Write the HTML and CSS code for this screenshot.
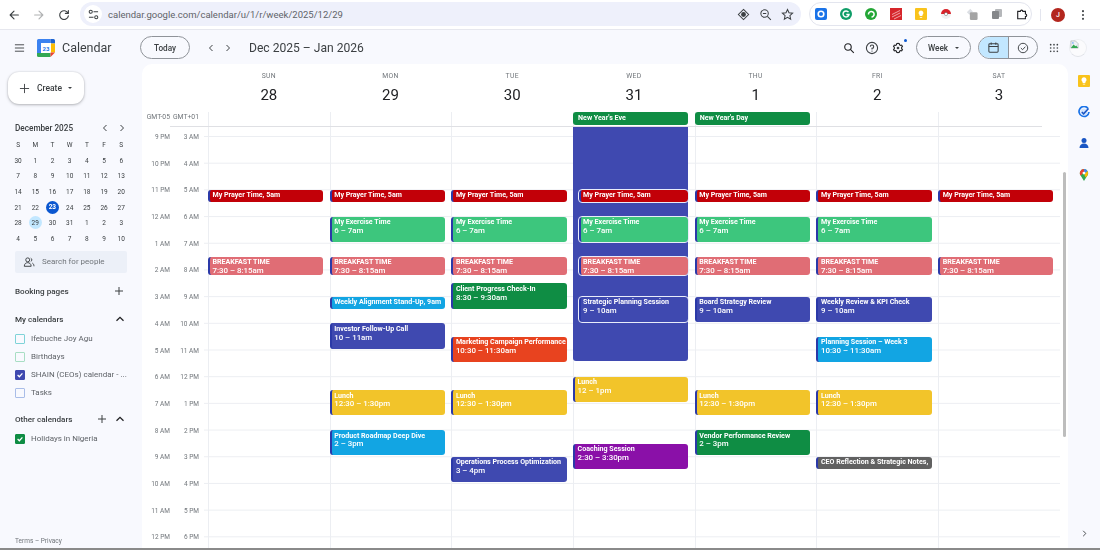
FILE: index.html
```html
<!DOCTYPE html>
<html lang="en">
<head>
<meta charset="utf-8">
<title>Google Calendar - Week</title>
<link rel="stylesheet" href="styles.css">
</head>
<body>
<div class="browser">
  <div class="nav">
    <svg class="ic" viewBox="0 0 16 16"><path d="M13 8H4M8 3.6 3.6 8 8 12.4" class="st"/></svg>
    <svg class="ic off" viewBox="0 0 16 16"><path d="M3 8h9M8 3.6 12.4 8 8 12.4" class="st"/></svg>
    <svg class="ic" viewBox="0 0 16 16"><path d="M12.6 6A5 5 0 1 0 13 9M13 2.8V6.2H9.6" class="st"/></svg>
  </div>
  <div class="omni">
    <span class="tune"><svg viewBox="0 0 12 12" width="11" height="11"><circle cx="3" cy="3" r="1.7" class="thin"/><path d="M6 3h5M1 9h5" class="thin"/><circle cx="9" cy="9" r="1.7" class="thin"/></svg></span>
    <span class="url">calendar.google.com/calendar/u/1/r/week/2025/12/29</span>
    <span class="omni-end">
      <svg class="ic12" viewBox="0 0 14 14"><path d="M7 1.500 12.500 7 7 12.500 1.500 7Z" class="thin"/><circle cx="7" cy="7" r="2.600" fill="#3c4043"/></svg>
      <svg class="ic12" viewBox="0 0 14 14"><circle cx="6" cy="6" r="4" class="thin"/><path d="m9 9 3.800 3.800M4.200 6h3.600" class="thin"/></svg>
      <svg class="ic12" viewBox="0 0 14 14"><path d="m7 1.600 1.600 3.600 3.900.4-2.900 2.600.8 3.900L7 10.100l-3.400 2 .8-3.900L1.500 5.600l3.900-.4Z" class="thin"/></svg>
    </span>
  </div>
  <div class="exts">
    <svg class="ext" viewBox="0 0 12 12"><rect width="12" height="12" rx="2" fill="#1a73e8"/><circle cx="6" cy="6" r="2.800" fill="none" stroke="#fff" stroke-width="1.600"/></svg>
    <svg class="ext" viewBox="0 0 12 12"><circle cx="6" cy="6" r="6" fill="#0f9d68"/><path d="M8.500 4.200A3 3 0 1 0 9 6.500H6.300" fill="none" stroke="#fff" stroke-width="1.400"/></svg>
    <svg class="ext" viewBox="0 0 12 12"><circle cx="6" cy="6" r="6" fill="#23a636"/><path d="M3.500 6.500A2.800 2.800 0 1 1 6.500 9" fill="none" stroke="#fff" stroke-width="1.500"/></svg>
    <svg class="ext" viewBox="0 0 12 12"><rect width="12" height="12" fill="#d6262b"/><path d="M2 9 10 5M2 6.500 10 2.500M4 11 11 7.500" stroke="#f6c4c4" stroke-width=".8"/></svg>
    <svg class="ext" viewBox="0 0 12 12"><rect width="12" height="12" rx="1" fill="#f9c31c"/><path d="M6 2.500a2.500 2.500 0 0 1 1.400 4.500v1H4.600V7A2.500 2.500 0 0 1 6 2.500ZM4.800 9h2.400v.8H4.800Z" fill="#fff"/></svg>
    <svg class="ext" viewBox="0 0 12 12"><path d="M1 6a5 5 0 0 1 10 0Z" fill="#d8232a"/><path d="M1 6a5 5 0 0 0 10 0Z" fill="#f1f1f1"/><circle cx="6" cy="6" r="1.600" fill="#fff" stroke="#666" stroke-width=".5"/></svg>
    <svg class="ext" viewBox="0 0 14 14"><path d="M1 5 5 1l3 3-4 4Z" fill="#dcdfe4"/><rect x="4.500" y="5" width="9" height="9" rx="1.500" fill="#a4a4a4"/></svg>
    <svg class="ext" viewBox="0 0 12 12"><rect x="4" y="1" width="7" height="8" rx="1" fill="#b5b7ba"/><rect x="1" y="3" width="7" height="8" rx="1" fill="#85878a"/></svg>
    <svg class="ext" viewBox="0 0 14 14"><path d="M2 4h3a1.500 1.500 0 0 1 3 0h3v3a1.500 1.500 0 0 1 0 3v2.500H2Z" fill="none" stroke="#202124" stroke-width="1.300"/></svg>
  </div>
  <span class="sep"></span>
  <span class="avatar">J</span>
  <svg class="kebab" viewBox="0 0 4 14"><circle cx="2" cy="2.500" r="1.200"/><circle cx="2" cy="7" r="1.200"/><circle cx="2" cy="11.500" r="1.200"/></svg>
</div>

<header class="top">
  <svg class="burger" viewBox="0 0 12 10"><path d="M1 1.500h10M1 5h10M1 8.500h10" class="st-t"/></svg>
  <svg class="logo" viewBox="0 0 18 18">
    <rect x="4" y="4" width="10" height="10" fill="#fff"/>
    <path d="M1.500 0H13.500V4H4V14H0V1.500A1.500 1.500 0 0 1 1.500 0Z" fill="#3b82f0"/>
    <path d="M13.500 0H16.500A1.500 1.500 0 0 1 18 1.500V4.500H14V4H13.500Z" fill="#1c62d0"/>
    <path d="M14 4.500h4V13.500h-4Z" fill="#fbbc04"/>
    <path d="M0 14h13.500v4H1.500A1.500 1.500 0 0 1 0 16.500Z" fill="#34a853"/>
    <path d="M13.500 13.500H18L13.500 18Z" fill="#ea4335"/>
    <text x="9" y="11.500" class="logo-num">23</text>
  </svg>
  <span class="brand">Calendar</span>
  <button class="pill today">Today</button>
  <svg class="chev first" viewBox="0 0 10 10"><path d="M6.500 2 3.500 5l3 3" class="st-t"/></svg>
  <svg class="chev" viewBox="0 0 10 10"><path d="m3.500 2 3 3-3 3" class="st-t"/></svg>
  <span class="range">Dec 2025 – Jan 2026</span>
  <div class="tools">
    <svg class="tool find" viewBox="0 0 14 14"><circle cx="5.800" cy="5.800" r="3.800" class="st-b"/><path d="m8.600 8.600 4 4" class="st-b"/></svg>
    <svg class="tool help" viewBox="0 0 14 14"><circle cx="7" cy="7" r="5.600" class="thin"/><path d="M5.300 5.600A1.700 1.700 0 1 1 7 7.400v1" class="thin"/><circle cx="7" cy="10.100" r=".6" fill="#3c4043"/></svg>
    <span class="gear-wrap">
      <svg class="tool" viewBox="0 0 14 14"><path d="M7 1.500 8.500 2l.3 1.300 1.300.7 1.200-.4.900 1.500-.9 1v1.800l.9 1-.9 1.500-1.200-.4-1.300.7L8.500 12 7 12.500 5.500 12l-.3-1.300-1.300-.7-1.200.4-.9-1.500.9-1V6.100l-.9-1 .9-1.500 1.200.4 1.300-.7L5.500 2Z" class="st-b"/><circle cx="7" cy="7" r="1.600" fill="#3c4043"/></svg>
      <span class="dot"></span>
    </span>
    <button class="pill week">Week<span class="caret"></span></button>
    <div class="toggle">
      <span class="seg on"><svg viewBox="0 0 14 14" width="13" height="13"><rect x="2" y="3" width="10" height="9" rx="1" class="thin"/><path d="M2 6h10M4.500 1.500V4M9.500 1.500V4" class="thin"/></svg></span>
      <span class="seg"><svg viewBox="0 0 14 14" width="12" height="12"><circle cx="7" cy="7" r="5.500" class="thin"/><path d="m4.500 7 2 2 3.200-3.500" class="thin"/></svg></span>
    </div>
    <svg class="apps" viewBox="0 0 12 12"><g fill="#3c4043"><circle cx="2" cy="2" r="1"/><circle cx="6" cy="2" r="1"/><circle cx="10" cy="2" r="1"/><circle cx="2" cy="6" r="1"/><circle cx="6" cy="6" r="1"/><circle cx="10" cy="6" r="1"/><circle cx="2" cy="10" r="1"/><circle cx="6" cy="10" r="1"/><circle cx="10" cy="10" r="1"/></g></svg>
    <span class="broken"><svg viewBox="0 0 10 10" width="9" height="9"><path d="M1 1h5l3 3v5H1Z" fill="#eef1f6" stroke="#9aa0a6" stroke-width=".6"/><path d="M1 9 4 5l2 2 1-1 2 3Z" fill="#34a853"/><circle cx="3.200" cy="3.200" r="1" fill="#8ab4f8"/></svg></span>
  </div>
</header>

<div class="shell">
  <aside class="side">
    <button class="create"><svg viewBox="0 0 12 12" width="11" height="11"><path d="M6 1v10M1 6h10" class="st-t"/></svg><span>Create</span><span class="caret"></span></button>
    <div class="mini-head">
      <span>December 2025</span>
      <svg class="mchev" viewBox="0 0 10 10"><path d="M6.500 2 3.500 5l3 3" class="st-t"/></svg>
      <svg class="mchev" viewBox="0 0 10 10"><path d="m3.500 2 3 3-3 3" class="st-t"/></svg>
    </div>
    <div class="mini">
      <span>S</span><span>M</span><span>T</span><span>W</span><span>T</span><span>F</span><span>S</span>
      <span>30</span><span>1</span><span>2</span><span>3</span><span>4</span><span>5</span><span>6</span>
      <span>7</span><span>8</span><span>9</span><span>10</span><span>11</span><span>12</span><span>13</span>
      <span>14</span><span>15</span><span>16</span><span>17</span><span>18</span><span>19</span><span>20</span>
      <span>21</span><span>22</span><span class="cur">23</span><span>24</span><span>25</span><span>26</span><span>27</span>
      <span>28</span><span class="sel">29</span><span>30</span><span>31</span><span>1</span><span>2</span><span>3</span>
      <span>4</span><span>5</span><span>6</span><span>7</span><span>8</span><span>9</span><span>10</span>
    </div>
    <div class="people">
      <svg viewBox="0 0 14 14" width="12" height="12"><circle cx="5.500" cy="4.500" r="2.300" class="thin"/><path d="M1.500 12c0-3 2-4.200 4-4.200s4 1.200 4 4.200ZM9 2.500a2.200 2.200 0 0 1 0 4M11 8.300c1 .6 1.800 1.700 1.800 3.700" class="thin"/></svg>
      <span>Search for people</span>
    </div>
    <div class="sec booking"><span>Booking pages</span><svg class="plus" viewBox="0 0 10 10"><path d="M5 1v8M1 5h8" class="st-t"/></svg></div>
    <div class="sec mine"><span>My calendars</span><svg class="up" viewBox="0 0 10 10"><path d="m1.500 6.800 3.500-3.500 3.500 3.500" class="st-b"/></svg></div>
    <ul class="cals">
      <li><span class="box teal"></span>Ifebuche Joy Agu</li>
      <li><span class="box mint"></span>Birthdays</li>
      <li><span class="box indigo"><svg viewBox="0 0 10 10"><path d="m2 5 2.200 2.200L8 3" class="tick"/></svg></span>SHAIN (CEOs) calendar - ...</li>
      <li><span class="box blue"></span>Tasks</li>
    </ul>
    <div class="sec other"><span>Other calendars</span><svg class="plus" viewBox="0 0 10 10"><path d="M5 1v8M1 5h8" class="st-t"/></svg><svg class="up" viewBox="0 0 10 10"><path d="m1.500 6.800 3.500-3.500 3.500 3.500" class="st-b"/></svg></div>
    <ul class="cals hol">
      <li><span class="box green"><svg viewBox="0 0 10 10"><path d="m2 5 2.200 2.200L8 3" class="tick"/></svg></span>Holidays in Nigeria</li>
    </ul>
    <div class="terms">Terms – Privacy</div>
  </aside>

  <main class="panel">
    <div class="heads">
      <span></span>
      <div class="dh"><small>SUN</small><b>28</b></div>
      <div class="dh"><small>MON</small><b>29</b></div>
      <div class="dh"><small>TUE</small><b>30</b></div>
      <div class="dh"><small>WED</small><b>31</b></div>
      <div class="dh"><small>THU</small><b>1</b></div>
      <div class="dh"><small>FRI</small><b>2</b></div>
      <div class="dh"><small>SAT</small><b>3</b></div>
    </div>
    <div class="allday">
      <div class="tz"><span>GMT-05</span><span>GMT+01</span></div>
      <div class="ad"></div>
      <div class="ad"></div>
      <div class="ad"></div>
      <div class="ad"><div class="chip c-green">New Year's Eve</div></div>
      <div class="ad"><div class="chip c-green">New Year's Day</div></div>
      <div class="ad"></div>
      <div class="ad"></div>
    </div>
    <div class="scroll">
      <div class="gutter">
        <div class="hr"><span>9 PM</span><span>3 AM</span></div>
        <div class="hr"><span>10 PM</span><span>4 AM</span></div>
        <div class="hr"><span>11 PM</span><span>5 AM</span></div>
        <div class="hr"><span>12 AM</span><span>6 AM</span></div>
        <div class="hr"><span>1 AM</span><span>7 AM</span></div>
        <div class="hr"><span>2 AM</span><span>8 AM</span></div>
        <div class="hr"><span>3 AM</span><span>9 AM</span></div>
        <div class="hr"><span>4 AM</span><span>10 AM</span></div>
        <div class="hr"><span>5 AM</span><span>11 AM</span></div>
        <div class="hr"><span>6 AM</span><span>12 PM</span></div>
        <div class="hr"><span>7 AM</span><span>1 PM</span></div>
        <div class="hr"><span>8 AM</span><span>2 PM</span></div>
        <div class="hr"><span>9 AM</span><span>3 PM</span></div>
        <div class="hr"><span>10 AM</span><span>4 PM</span></div>
        <div class="hr"><span>11 AM</span><span>5 PM</span></div>
        <div class="hr"><span>12 PM</span><span>6 PM</span></div>
      </div>
      <div class="days">
        <div class="day">
          <div class="ev c-red" style="--s:2;--h:.5"><b>My Prayer Time, 5am</b></div>
          <div class="ev c-rose" style="--s:4.5;--h:.75"><b>BREAKFAST TIME</b><i>7:30 – 8:15am</i></div>
        </div>
        <div class="day">
          <div class="ev c-red" style="--s:2;--h:.5"><b>My Prayer Time, 5am</b></div>
          <div class="ev c-mint" style="--s:3;--h:1"><b>My Exercise Time</b><i>6 – 7am</i></div>
          <div class="ev c-rose" style="--s:4.5;--h:.75"><b>BREAKFAST TIME</b><i>7:30 – 8:15am</i></div>
          <div class="ev c-sky" style="--s:6;--h:.5"><b>Weekly Alignment Stand-Up, 9am</b></div>
          <div class="ev c-ind" style="--s:7;--h:1"><b>Investor Follow-Up Call</b><i>10 – 11am</i></div>
          <div class="ev c-yel" style="--s:9.5;--h:1"><b>Lunch</b><i>12:30 – 1:30pm</i></div>
          <div class="ev c-sky" style="--s:11;--h:1"><b>Product Roadmap Deep Dive</b><i>2 – 3pm</i></div>
        </div>
        <div class="day">
          <div class="ev c-red" style="--s:2;--h:.5"><b>My Prayer Time, 5am</b></div>
          <div class="ev c-mint" style="--s:3;--h:1"><b>My Exercise Time</b><i>6 – 7am</i></div>
          <div class="ev c-rose" style="--s:4.5;--h:.75"><b>BREAKFAST TIME</b><i>7:30 – 8:15am</i></div>
          <div class="ev c-green" style="--s:5.5;--h:1"><b>Client Progress Check-In</b><i>8:30 – 9:30am</i></div>
          <div class="ev c-org" style="--s:7.5;--h:1"><b>Marketing Campaign Performance</b><i>10:30 – 11:30am</i></div>
          <div class="ev c-yel" style="--s:9.5;--h:1"><b>Lunch</b><i>12:30 – 1:30pm</i></div>
          <div class="ev c-ind" style="--s:12;--h:1"><b>Operations Process Optimization</b><i>3 – 4pm</i></div>
        </div>
        <div class="day">
          <div class="ev block c-ind" style="--s:-.42;--h:8.9"></div>
          <div class="ev over c-red" style="--s:2;--h:.5"><b>My Prayer Time, 5am</b></div>
          <div class="ev over c-mint" style="--s:3;--h:1"><b>My Exercise Time</b><i>6 – 7am</i></div>
          <div class="ev over c-rose" style="--s:4.5;--h:.75"><b>BREAKFAST TIME</b><i>7:30 – 8:15am</i></div>
          <div class="ev over c-ind" style="--s:6;--h:1"><b>Strategic Planning Session</b><i>9 – 10am</i></div>
          <div class="ev c-yel" style="--s:9;--h:1"><b>Lunch</b><i>12 – 1pm</i></div>
          <div class="ev c-pur" style="--s:11.5;--h:1"><b>Coaching Session</b><i>2:30 – 3:30pm</i></div>
        </div>
        <div class="day">
          <div class="ev c-red" style="--s:2;--h:.5"><b>My Prayer Time, 5am</b></div>
          <div class="ev c-mint" style="--s:3;--h:1"><b>My Exercise Time</b><i>6 – 7am</i></div>
          <div class="ev c-rose" style="--s:4.5;--h:.75"><b>BREAKFAST TIME</b><i>7:30 – 8:15am</i></div>
          <div class="ev c-ind" style="--s:6;--h:1"><b>Board Strategy Review</b><i>9 – 10am</i></div>
          <div class="ev c-yel" style="--s:9.5;--h:1"><b>Lunch</b><i>12:30 – 1:30pm</i></div>
          <div class="ev c-green" style="--s:11;--h:1"><b>Vendor Performance Review</b><i>2 – 3pm</i></div>
        </div>
        <div class="day">
          <div class="ev c-red" style="--s:2;--h:.5"><b>My Prayer Time, 5am</b></div>
          <div class="ev c-mint" style="--s:3;--h:1"><b>My Exercise Time</b><i>6 – 7am</i></div>
          <div class="ev c-rose" style="--s:4.5;--h:.75"><b>BREAKFAST TIME</b><i>7:30 – 8:15am</i></div>
          <div class="ev c-ind" style="--s:6;--h:1"><b>Weekly Review &amp; KPI Check</b><i>9 – 10am</i></div>
          <div class="ev c-sky" style="--s:7.5;--h:1"><b>Planning Session – Week 3</b><i>10:30 – 11:30am</i></div>
          <div class="ev c-yel" style="--s:9.5;--h:1"><b>Lunch</b><i>12:30 – 1:30pm</i></div>
          <div class="ev c-gry" style="--s:12;--h:.5"><b>CEO Reflection &amp; Strategic Notes,</b></div>
        </div>
        <div class="day">
          <div class="ev c-red" style="--s:2;--h:.5"><b>My Prayer Time, 5am</b></div>
          <div class="ev c-rose" style="--s:4.5;--h:.75"><b>BREAKFAST TIME</b><i>7:30 – 8:15am</i></div>
        </div>
      </div>
      <span class="thumb"></span>
    </div>
  </main>

  <aside class="rail">
    <svg class="rail-ic" viewBox="0 0 12 12"><rect width="12" height="12" rx="1" fill="#f9c31c"/><path d="M6 2.300a2.500 2.500 0 0 1 1.400 4.600v1H4.600v-1A2.500 2.500 0 0 1 6 2.300ZM4.800 8.700h2.400v.9H4.800Z" fill="#fff"/></svg>
    <svg class="rail-ic" viewBox="0 0 12 12"><path d="M10 2.400A5 5 0 1 0 11 6" fill="none" stroke="#1a73e8" stroke-width="1.700"/><circle cx="6" cy="6" r="3.600" fill="#d2e3fc"/><path d="m3.800 6 1.800 1.800L10.500 2.500" fill="none" stroke="#1a56c4" stroke-width="1.500"/></svg>
    <svg class="rail-ic" viewBox="0 0 12 12"><circle cx="6" cy="3.500" r="2.500" fill="#1a56c4"/><path d="M1.500 11c0-3 2-4.500 4.500-4.500s4.500 1.500 4.500 4.500Z" fill="#1a56c4"/></svg>
    <svg class="rail-ic" viewBox="0 0 12 14"><path d="M6 0a4.800 4.800 0 0 0-4 7.500L6 14l4-6.500A4.800 4.800 0 0 0 6 0Z" fill="#34a853"/><path d="M2 7.500A4.800 4.800 0 0 1 6 0v3.300L3 7Z" fill="#ea4335"/><path d="M6 0a4.800 4.800 0 0 1 4 2.200L7.500 5 6 3.300Z" fill="#4285f4"/><path d="M10 2.200a4.800 4.800 0 0 1 0 5.300L8 10 6.500 7 7.500 5Z" fill="#fbbc04"/><circle cx="6" cy="4.800" r="1.700" fill="#fff"/></svg>
    <svg class="rail-chev" viewBox="0 0 10 10"><path d="m3.500 2 3 3-3 3" class="st-t"/></svg>
  </aside>
</div>
<div class="edge"></div>
</body>
</html>
```
FILE: styles.css
```css
* { box-sizing: border-box; }
html, body { margin: 0; height: 100%; }
body {
  width: 1100px; height: 550px; overflow: hidden;
  display: flex; flex-direction: column;
  background: #f8f9fe; color: #3c4043;
  font-family: Roboto, "Liberation Sans", sans-serif;
  filter: blur(.45px);
}
button { font: inherit; color: inherit; background: none; padding: 0; }
ul { list-style: none; margin: 0; padding: 0; }

.st { fill: none; stroke: #3c4043; stroke-width: 1.300; stroke-linecap: round; stroke-linejoin: round; }
.st-t { fill: none; stroke: #3c4043; stroke-width: 1; }
.st-b { fill: none; stroke: #202124; stroke-width: 1.300; }
.thin { fill: none; stroke: #3c4043; stroke-width: 1.100; }
.tick { fill: none; stroke: #fff; stroke-width: 1.500; }

/* browser chrome */
.browser {
  flex: 0 0 30px; display: flex; align-items: center;
  background: #fff; border-bottom: 1px solid #e6e7ee;
}
.nav { width: 80px; display: flex; align-items: center; gap: 11px; padding-left: 7px; }
.ic { width: 14px; height: 14px; }
.off { opacity: .4; }
.omni {
  width: 721px; height: 24px; margin-top: -1px;
  display: flex; align-items: center; gap: 6px; padding: 0 7px 0 4px;
  background: #eef0fb; border-radius: 12px;
}
.tune {
  width: 18px; height: 18px; border-radius: 50%; background: #fff;
  display: flex; align-items: center; justify-content: center;
}
.url { font-size: 9.500px; color: #5f6368; }
.omni-end { margin-left: auto; display: flex; gap: 9px; }
.ic12 { width: 13px; height: 13px; }
.exts {
  width: 223px; height: 24px; margin: -1px 0 0 8px;
  display: flex; align-items: center; gap: 13.100px; padding: 0 5px;
  background: #fff; border: 1px solid #e3e5ee; border-radius: 12px;
}
.ext { width: 12px; height: 12px; flex: none; }
.sep { width: 1px; height: 12px; margin-left: 8px; background: #e3e5ee; }
.avatar {
  width: 14px; height: 14px; margin-left: 10px; border-radius: 50%;
  display: flex; align-items: center; justify-content: center;
  background: #b3261e; color: #fff; font-size: 7px; font-weight: 500;
}
.kebab { width: 4px; height: 12px; margin-left: 16px; fill: #3c4043; }

/* app header */
.top { flex: 0 0 34px; display: flex; align-items: center; padding: 1px 0 0 14px; }
.burger { width: 11px; height: 10px; }
.logo { width: 18px; height: 18px; margin-left: 12px; }
.logo-num { font-size: 6px; font-weight: 700; fill: #1a73e8; text-anchor: middle; }
.brand { margin-left: 7px; width: 79px; font-size: 12.500px; color: #3c4043; }
.pill { border: 1px solid #8f9399; border-radius: 12px; height: 23px; font-size: 8.200px; font-weight: 500; }
.today { width: 50px; margin-left: -1px; }
.chev { width: 10px; height: 10px; }
.chev.first { margin-left: 16px; margin-right: 7px; }
.range { margin-left: 16px; font-size: 12.100px; color: #3c4043; }
.tools { margin-left: auto; display: flex; align-items: center; }
.tool { width: 12px; height: 12px; display: block; }
.find { margin-right: 10px; }
.help { width: 14px; height: 14px; }
.gear-wrap { position: relative; margin-left: 13px; margin-right: 12px; }
.dot { position: absolute; top: -3px; right: -3px; width: 3px; height: 3px; border-radius: 50%; background: #0b57d0; }
.week { width: 55px; display: flex; align-items: center; justify-content: center; gap: 7px; }
.caret { display: inline-block; border: 2px solid transparent; border-top: 2.500px solid #3c4043; border-bottom: 0; }
.toggle {
  width: 60px; height: 23px; margin-left: 7px; display: flex;
  border: 1px solid #8f9399; border-radius: 12px; overflow: hidden;
}
.seg { flex: 1; display: flex; align-items: center; justify-content: center; }
.seg.on { background: #c2e7ff; border-right: 1px solid #8f9399; }
.apps { width: 10px; height: 10px; margin-left: 11px; }
.broken {
  width: 18px; height: 18px; margin: 0 13px 0 10px; border-radius: 50%;
  border: 1px solid #eceef2; border-bottom-color: #e0e2e8; background: #fbfbfd;
  display: flex; padding: 0;
}

.shell { flex: 1; display: flex; min-height: 0; }

/* sidebar */
.side { width: 142px; display: flex; flex-direction: column; padding-top: 8px; font-size: 8px; color: #5f6368; }
.create {
  width: 76px; height: 32px; margin-left: 8px; border: 0; background: #fff; border-radius: 11px;
  box-shadow: 0 1px 3px rgba(60,64,67,.35), 0 0 2px rgba(60,64,67,.15);
  display: flex; align-items: center; padding-left: 11px; gap: 7px;
  font-size: 8.500px; font-weight: 500; color: #3c4043;
}
.create .caret { margin-left: -1px; }
.mini-head {
  margin: 18px 0 0 15px; width: 112px; height: 12px; display: flex; align-items: center; gap: 7px;
  font-size: 8.200px; font-weight: 500; color: #3c4043;
}
.mini-head span { flex: 1; }
.mchev { width: 10px; height: 10px; }
.mini {
  margin: 3.500px 0 0 9.500px; display: grid; grid-template-columns: repeat(7, 17.200px);
  grid-auto-rows: 15.600px; font-size: 6.500px; color: #3c4043;
}
.mini span { display: flex; align-items: center; justify-content: center; }
.mini .cur { background: #0b57d0; color: #fff; font-weight: 700; border-radius: 50%; width: 13px; height: 13px; margin: 1px 2px; }
.mini .sel { background: #c2e7ff; border-radius: 50%; width: 13px; height: 13px; margin: 1px 2px; }
.people {
  margin: 4px 0 0 15px; width: 112px; height: 22px; display: flex; align-items: center; gap: 7px; padding-left: 8px;
  background: #ecf0f8; font-size: 8px; color: #70757a; border-radius: 2px;
}
.sec { display: flex; align-items: center; margin-left: 15px; width: 110px; height: 14px; font-size: 8.100px; font-weight: 500; color: #3c4043; }
.sec span { flex: 1; }
.booking { margin-top: 11px; }
.mine { margin-top: 14px; }
.other { margin-top: 10px; }
.plus { width: 10px; height: 10px; margin-right: 1px; }
.other .plus { margin-right: 8px; }
.up { width: 10px; height: 10px; }
.cals { margin: 4px 0 0 15px; }
.cals li { height: 18px; display: flex; align-items: center; gap: 6px; font-size: 8px; }
.box { width: 10px; height: 10px; border-radius: 1px; border: 1px solid; display: flex; }
.teal { border-color: #7fd3d8; }
.mint { border-color: #a8dec4; }
.blue { border-color: #a9bde8; }
.indigo { border-color: #3f49b0; background: #3f49b0; }
.green { border-color: #0f8d44; background: #0f8d44; }
.hol { margin-top: 4px; }
.terms { margin: auto 0 3px 15px; font-size: 6.500px; color: #70757a; }

/* calendar panel */
.panel { width: 926px; background: #fff; border-radius: 10px 10px 0 0; display: flex; flex-direction: column; overflow: hidden; position: relative; }
.heads { flex: 0 0 48px; display: grid; grid-template-columns: 66px repeat(7, 121.700px); }
.dh { display: flex; flex-direction: column; align-items: center; padding-top: 8px; }
.dh small { font-size: 6.800px; color: #70757a; letter-spacing: .3px; line-height: 8px; }
.dh b { font-weight: 400; font-size: 15px; line-height: 20px; margin-top: 5px; color: #202124; }
.allday { flex: 0 0 14px; display: grid; grid-template-columns: 66px repeat(7, 121.700px); }
.tz { display: grid; grid-template-columns: 28px 29px; font-size: 6.800px; color: #70757a; text-align: right; line-height: 11px; }
.ad { border-left: 1px solid #eceef2; padding: 0 6.500px 0 0; }
.chip { height: 12.500px; margin-left: -1px; border-radius: 3px; font-size: 7.100px; font-weight: 700; color: #fff; padding-left: 5px; line-height: 12px; }

.scroll { flex: 1; min-height: 0; display: flex; position: relative; overflow: hidden; }
.scroll::before { content: ""; position: absolute; z-index: 1; left: 28px; right: 26px; top: 0; height: 1px; background: #dfe0e4; }
.gutter { width: 62px; flex: none; margin-top: -2.350px; }
.hr { height: 26.700px; display: grid; grid-template-columns: 28px 29px; align-items: center; font-size: 6.500px; color: #70757a; text-align: right; }
.days {
  width: 856px; flex: none; padding-left: 4px; display: flex;
  background-image: linear-gradient(#eceef2 1px, transparent 1px);
  background-size: 100% 26.700px; background-position: 0 10px;
  background-repeat: repeat-y;
}
.day { width: 121.700px; flex: none; position: relative; border-left: 1px solid #eceef2; }

.ev {
  position: absolute; left: -1px; right: 6.500px;
  top: calc(10.500px + var(--s) * 26.700px);
  height: calc(var(--h) * 26.700px - 1.500px);
  min-height: 12.500px;
  border-radius: 3px; border-left: 2px solid #2b39a8;
  color: #fff; font-size: 7.100px; line-height: 8.800px;
  padding: 1.500px 2px 0 2.500px; overflow: hidden; white-space: nowrap;
}
.ev b, .ev i { display: block; font-style: normal; }
.ev b { font-weight: 700; }
.ev i { font-weight: 500; font-size: 7.900px; }
.ev.block { border-left: 0; border-radius: 0 0 3px 3px; }
.ev.over { left: 4.500px; right: 6.500px; outline: 1px solid #e9ecfa; outline-offset: 0; }
.c-red { background: #c20008; }
.c-rose { background: #e06d75; }
.c-mint { background: #3dc67d; }
.c-sky { background: #12a5e3; }
.c-ind { background: #3f49b0; }
.c-yel { background: #f2c42a; }
.c-green { background: #0f8d44; }
.c-org { background: #e8431f; }
.c-pur { background: #8a10a8; }
.c-gry { background: #616161; }
.thumb { position: absolute; right: 2px; top: 46px; width: 3px; height: 265px; background: #bdbdbd; border-radius: 2px; z-index: 2; }

/* right rail */
.rail { width: 32px; display: flex; flex-direction: column; align-items: center; padding-top: 11px; }
.rail-ic { width: 12px; height: 12px; margin-bottom: 19.200px; }
.rail-chev { width: 9px; height: 9px; margin-top: auto; margin-bottom: 10px; }

.edge { flex: 0 0 2px; background: #8a8a8a; }
```
